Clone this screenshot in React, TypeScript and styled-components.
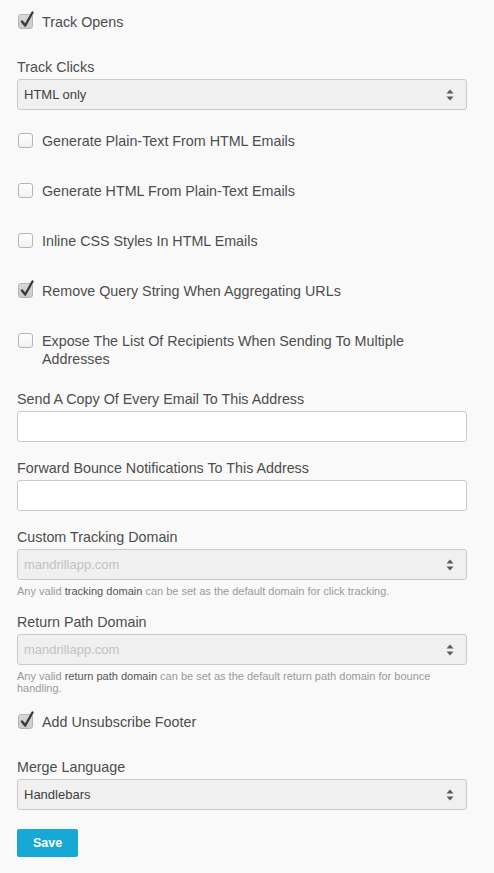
import React from "react";
import styled, { createGlobalStyle } from "styled-components";

const GlobalStyle = createGlobalStyle`
  body {
    margin: 0;
    background: #f9f9f9;
    font-family: "Liberation Sans", Arial, sans-serif;
    color: #4d4d4d;
  }
`;

const Form = styled.form`
  width: 450px;
  padding: 13px 17px 16px;
  display: flex;
  flex-direction: column;
`;

const CheckRow = styled.label<{ $top?: number }>`
  display: flex;
  align-items: flex-start;
  margin-top: ${(p) => p.$top ?? 0}px;
  font-size: 14.3px;
  line-height: 18px;
  color: #4d4d4d;
`;

const Box = styled.span<{ $checked?: boolean }>`
  position: relative;
  flex: none;
  width: 15px;
  height: 15px;
  margin: 1px 9px 0 1px;
  box-sizing: border-box;
  border: 1px solid #b5b5b5;
  border-radius: 3px;
  background: ${(p) =>
    p.$checked ? "linear-gradient(#d8d8d8, #cbcbcb)" : "linear-gradient(#ffffff, #f1f1f1)"};

  svg {
    position: absolute;
    left: 0;
    top: -4px;
  }
`;

const Field = styled.div<{ $top?: number }>`
  display: flex;
  flex-direction: column;
  margin-top: ${(p) => p.$top ?? 0}px;
`;

const Label = styled.div`
  font-size: 14.3px;
  line-height: 18px;
  color: #4d4d4d;
  margin-bottom: 3px;
`;

const SelectBox = styled.div<{ $disabled?: boolean }>`
  height: 31px;
  box-sizing: border-box;
  border: 1px solid #cacaca;
  border-radius: 3px;
  background: #f0f0f0;
  display: flex;
  align-items: center;
  justify-content: space-between;
  padding: 0 12px 0 6px;
  font-size: 13px;
  color: ${(p) => (p.$disabled ? "#c2c2c2" : "#404040")};
`;

const TextInput = styled.input`
  height: 31px;
  box-sizing: border-box;
  border: 1px solid #cacaca;
  border-radius: 3px;
  background: #ffffff;
  margin: 0;
  padding: 0 6px;
  font-family: inherit;
  font-size: 13px;
`;

const Help = styled.div`
  margin-top: 5px;
  font-size: 11px;
  line-height: 12px;
  color: #9a9a9a;

  b {
    font-weight: normal;
    color: #555555;
  }
`;

const SaveButton = styled.button`
  margin-top: 19px;
  align-self: flex-start;
  width: 61px;
  height: 28px;
  border: none;
  border-radius: 2px;
  background: #17a8d6;
  color: #ffffff;
  font-family: inherit;
  font-size: 12.5px;
  font-weight: bold;
`;

function Check({ checked }: { checked?: boolean }) {
  return (
    <Box $checked={checked}>
      {checked && (
        <svg width="16" height="18" viewBox="0 0 16 18">
          <path
            d="M3 10.5 L6.2 14.5 L13.5 1.5"
            fill="none"
            stroke="#3a3a3a"
            strokeWidth="2.4"
            strokeLinecap="round"
            strokeLinejoin="round"
          />
        </svg>
      )}
    </Box>
  );
}

function Arrows() {
  return (
    <svg width="8" height="12" viewBox="0 0 8 12">
      <path d="M0.5 4.5 L4 0.5 L7.5 4.5 Z" fill="#5a5a5a" />
      <path d="M0.5 7.5 L4 11.5 L7.5 7.5 Z" fill="#5a5a5a" />
    </svg>
  );
}

function Select({ value, disabled }: { value: string; disabled?: boolean }) {
  return (
    <SelectBox $disabled={disabled}>
      <span>{value}</span>
      <Arrows />
    </SelectBox>
  );
}

const options = [
  { text: "Generate Plain-Text From HTML Emails", checked: false },
  { text: "Generate HTML From Plain-Text Emails", checked: false },
  { text: "Inline CSS Styles In HTML Emails", checked: false },
  { text: "Remove Query String When Aggregating URLs", checked: true },
  { text: "Expose The List Of Recipients When Sending To Multiple Addresses", checked: false },
];

export default function App() {
  return (
    <>
      <GlobalStyle />
      <Form onSubmit={(e) => e.preventDefault()}>
        <CheckRow>
          <Check checked />
          <span>Track Opens</span>
        </CheckRow>

        <Field $top={27}>
          <Label>Track Clicks</Label>
          <Select value="HTML only" />
        </Field>

        {options.map((o, i) => (
          <CheckRow key={i} $top={i === 0 ? 22 : 32}>
            <Check checked={o.checked} />
            <span>{o.text}</span>
          </CheckRow>
        ))}

        <Field $top={22}>
          <Label>Send A Copy Of Every Email To This Address</Label>
          <TextInput type="text" />
        </Field>

        <Field $top={17}>
          <Label>Forward Bounce Notifications To This Address</Label>
          <TextInput type="text" />
        </Field>

        <Field $top={17}>
          <Label>Custom Tracking Domain</Label>
          <Select value="mandrillapp.com" disabled />
          <Help>
            Any valid <b>tracking domain</b> can be set as the default domain for click tracking.
          </Help>
        </Field>

        <Field $top={16}>
          <Label>Return Path Domain</Label>
          <Select value="mandrillapp.com" disabled />
          <Help>
            Any valid <b>return path domain</b> can be set as the default return path domain for
            bounce handling.
          </Help>
        </Field>

        <CheckRow $top={19}>
          <Check checked />
          <span>Add Unsubscribe Footer</span>
        </CheckRow>

        <Field $top={27}>
          <Label>Merge Language</Label>
          <Select value="Handlebars" />
        </Field>

        <SaveButton type="submit">Save</SaveButton>
      </Form>
    </>
  );
}
